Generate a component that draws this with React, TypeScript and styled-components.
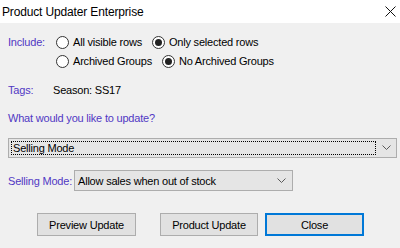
import styled, { createGlobalStyle } from "styled-components";

const GlobalStyle = createGlobalStyle`
  html, body {
    margin: 0;
    padding: 0;
    background: #f0f0f0;
  }
  body {
    font-family: "Liberation Sans", Arial, sans-serif;
    font-size: 11px;
    letter-spacing: -0.2px;
    color: #000;
  }
`;

function Chevron() {
  return (
    <svg width="9" height="6" viewBox="0 0 9 6">
      <path d="M0.5 0.5 L4.5 4.5 L8.5 0.5" fill="none" stroke="#5a5a5a" strokeWidth="1" />
    </svg>
  );
}

function CloseIcon() {
  return (
    <svg width="11" height="11" viewBox="0 0 11 11">
      <path d="M0.5 0.5 L10.5 10.5 M10.5 0.5 L0.5 10.5" stroke="#111" strokeWidth="1" />
    </svg>
  );
}

function Radio({ label, checked }: { label: string; checked?: boolean }) {
  return (
    <RadioItem>
      <RadioCircle $checked={checked} />
      <span>{label}</span>
    </RadioItem>
  );
}

function App() {
  return (
    <Window>
      <GlobalStyle />
      <TitleBar>
        <Title>Product Updater Enterprise</Title>
        <CloseButton>
          <CloseIcon />
        </CloseButton>
      </TitleBar>

      <Body>
        <IncludeBlock>
          <Label $width={48}>Include:</Label>
          <RadioRows>
            <RadioRow>
              <Radio label="All visible rows" />
              <Radio label="Only selected rows" checked />
            </RadioRow>
            <RadioRow>
              <Radio label="Archived Groups" />
              <Radio label="No Archived Groups" checked />
            </RadioRow>
          </RadioRows>
        </IncludeBlock>

        <Row $top={9}>
          <Label $width={45}>Tags:</Label>
          <span>Season: SS17</span>
        </Row>

        <Row $top={9}>
          <Label>What would you like to update?</Label>
        </Row>

        <WideSelect>
          <FocusBox>Selling Mode</FocusBox>
          <ArrowBox>
            <Chevron />
          </ArrowBox>
        </WideSelect>

        <Row $top={12} $height={21}>
          <Label $width={66}>Selling Mode:</Label>
          <SmallSelect>
            <span>Allow sales when out of stock</span>
            <Chevron />
          </SmallSelect>
        </Row>

        <ButtonRow>
          <Button>Preview Update</Button>
          <Button $before={24} $width={98}>Product Update</Button>
          <Button $before={7} $primary>Close</Button>
        </ButtonRow>
      </Body>
    </Window>
  );
}

export default App;

const Window = styled.div`
  width: 400px;
  height: 248px;
  background: #f0f0f0;
  overflow: hidden;
`;

const TitleBar = styled.div`
  display: flex;
  align-items: center;
  justify-content: space-between;
  height: 23px;
  padding: 0 4px 0 2px;
  background: #fff;
`;

const Title = styled.div`
  font-size: 12px;
  letter-spacing: -0.15px;
  color: #000;
`;

const CloseButton = styled.div`
  display: flex;
  align-items: center;
  justify-content: center;
  width: 12px;
  height: 12px;
  margin-top: -1px;
`;

const Body = styled.div`
  display: flex;
  flex-direction: column;
  padding: 10px 3px 0 8px;
`;

const Label = styled.span<{ $width?: number }>`
  color: #5038c4;
  flex-shrink: 0;
  white-space: nowrap;
  width: ${({ $width }) => ($width ? `${$width}px` : "auto")};
`;

const IncludeBlock = styled.div`
  display: flex;
  align-items: flex-start;
  line-height: 19px;
`;

const RadioRows = styled.div`
  display: flex;
  flex-direction: column;
`;

const RadioRow = styled.div`
  display: flex;
  align-items: center;
  gap: 10px;
  height: 19px;
`;

const RadioItem = styled.label`
  display: flex;
  align-items: center;
  gap: 4px;
`;

const RadioCircle = styled.span<{ $checked?: boolean }>`
  position: relative;
  box-sizing: border-box;
  width: 13px;
  height: 13px;
  border: 1px solid #333;
  border-radius: 50%;
  background: #fff;

  &::after {
    content: "";
    display: ${({ $checked }) => ($checked ? "block" : "none")};
    position: absolute;
    left: 2px;
    top: 2px;
    width: 7px;
    height: 7px;
    border-radius: 50%;
    background: #222;
  }
`;

const Row = styled.div<{ $top?: number; $height?: number }>`
  display: flex;
  align-items: center;
  height: ${({ $height }) => $height ?? 19}px;
  margin-top: ${({ $top }) => $top ?? 0}px;
`;

const WideSelect = styled.div`
  display: flex;
  align-items: center;
  box-sizing: border-box;
  height: 20px;
  margin-top: 11px;
  border: 1px solid #adadad;
  background: #e5e5e5;
  padding: 0 0 0 2px;
`;

const FocusBox = styled.div`
  flex: 1;
  box-sizing: border-box;
  height: 14px;
  line-height: 12px;
  padding-left: 1px;
  border: 1px dotted #000;
`;

const ArrowBox = styled.div`
  display: flex;
  align-items: center;
  justify-content: center;
  width: 20px;
`;

const SmallSelect = styled.div`
  display: flex;
  align-items: center;
  justify-content: space-between;
  box-sizing: border-box;
  width: 219px;
  height: 21px;
  padding: 0 6px 0 3px;
  border: 1px solid #adadad;
  background: #e5e5e5;
`;

const ButtonRow = styled.div`
  display: flex;
  margin-top: 22px;
  padding-left: 29px;
`;

const Button = styled.div<{ $before?: number; $width?: number; $primary?: boolean }>`
  display: flex;
  align-items: center;
  justify-content: center;
  box-sizing: border-box;
  width: ${({ $width }) => $width ?? 99}px;
  height: 23px;
  margin-left: ${({ $before }) => $before ?? 0}px;
  border: ${({ $primary }) => ($primary ? "2px solid #0078d7" : "1px solid #adadad")};
  background: #e1e1e1;
  color: #000;
`;
